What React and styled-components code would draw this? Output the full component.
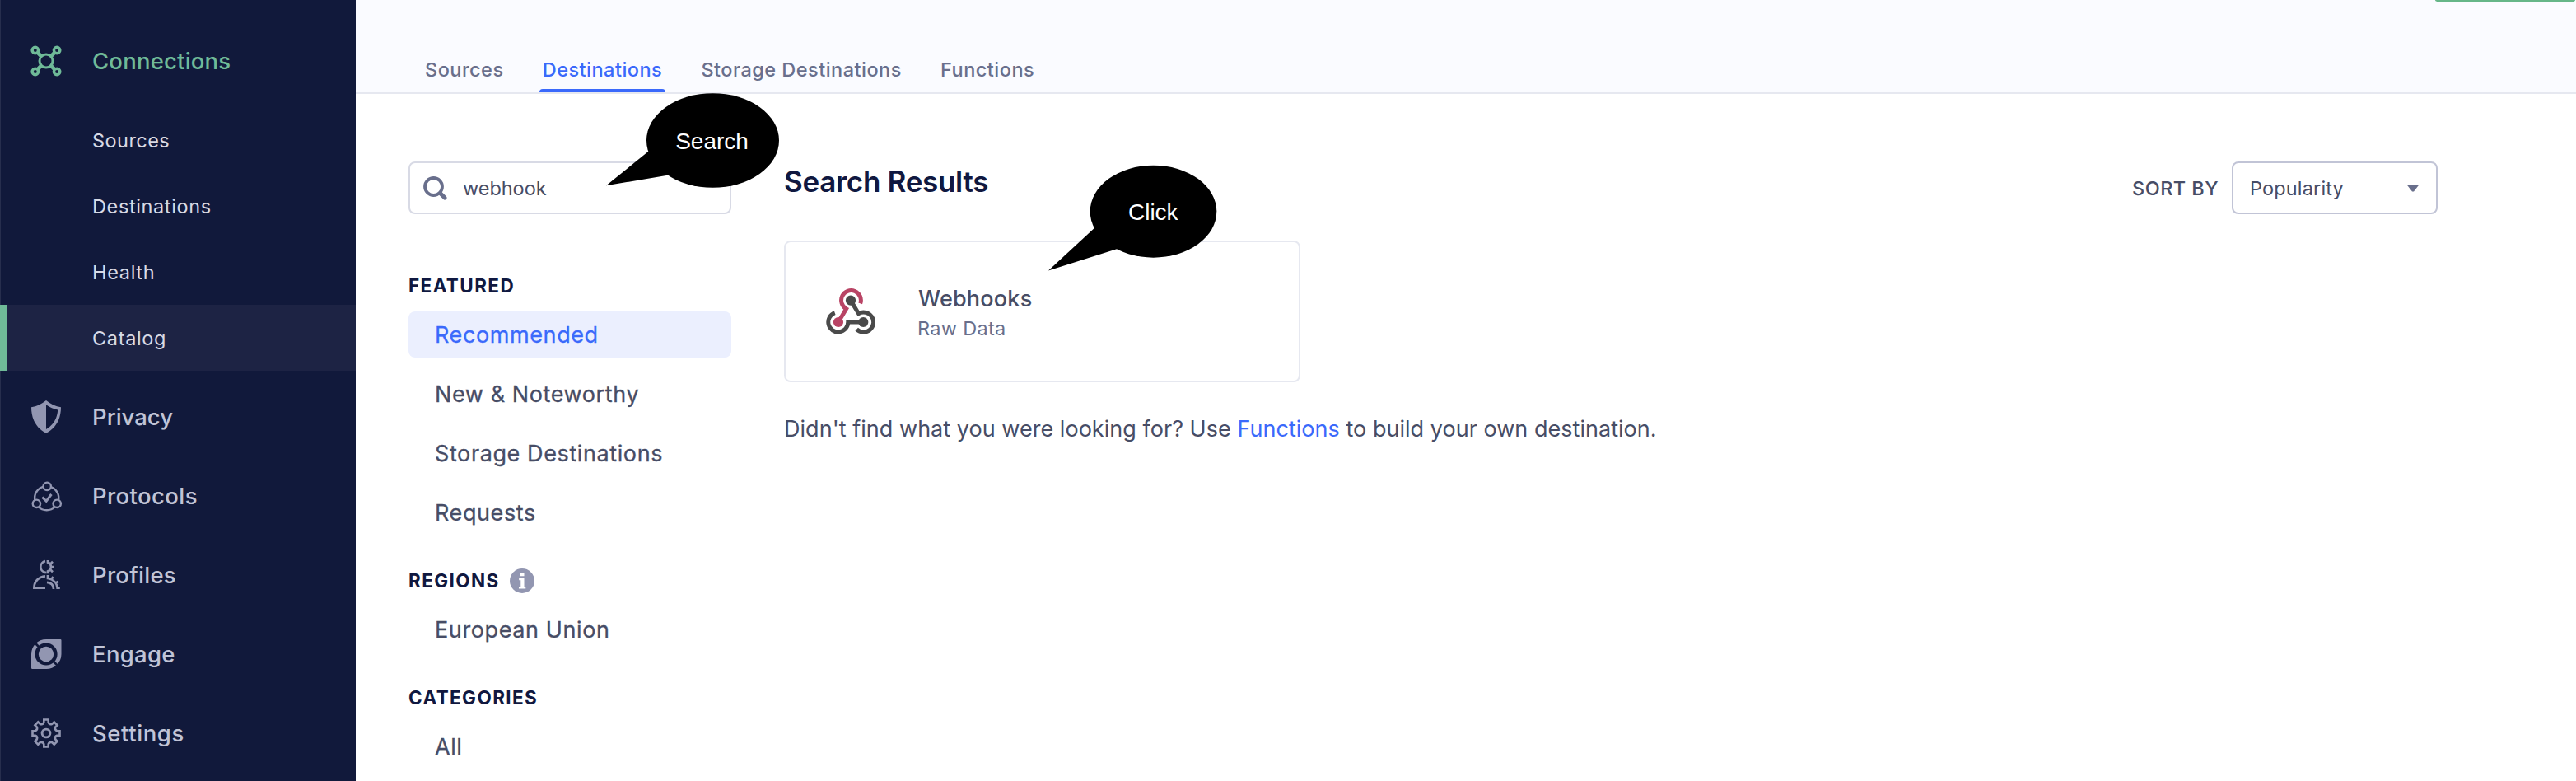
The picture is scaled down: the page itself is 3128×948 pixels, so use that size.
import React from 'react';
import styled, { createGlobalStyle } from 'styled-components';

const colors = {
  navy: '#11193b',
  navyActive: '#1d2344',
  heading: '#101840',
  text: '#474d66',
  muted: '#696f8c',
  icon: '#9296b1',
  green: '#6fba98',
  blue: '#3a69fb',
  border: '#e6e8f0',
};

const GlobalStyle = createGlobalStyle`
  *, *::before, *::after { box-sizing: border-box; }
  body {
    margin: 0;
    overflow: hidden;
    background: #ffffff;
    color: ${colors.text};
    font-family: Inter, 'Liberation Sans', sans-serif;
  }
`;

const Page = styled.div`
  position: relative;
  display: flex;
  width: 3128px;
  height: 948px;
  overflow: hidden;
`;

/* ---------- Sidebar ---------- */

const Sidebar = styled.nav`
  flex: none;
  width: 432px;
  padding-top: 26px;
  background: ${colors.navy};
  box-shadow: inset 1px 0 0 #272e4d;
`;

const NavItem = styled.a`
  display: flex;
  align-items: center;
  gap: 36px;
  height: 96px;
  padding-left: 36px;
  font-size: 27.5px;
  font-weight: 500;
  letter-spacing: ${(p) => p.$track}px;
  color: ${(p) => (p.$active ? colors.green : '#c1c4d6')};
`;

const NavIcon = styled.svg`
  flex: none;
  width: 40px;
  height: 40px;
  fill: none;
  stroke: ${(p) => (p.$active ? colors.green : colors.icon)};
`;

const SubNav = styled.div`
  padding: 8px 0;
`;

const SubNavItem = styled.a`
  display: flex;
  align-items: center;
  height: 80px;
  padding-left: 104px;
  border-left: 8px solid ${(p) => (p.$active ? colors.green : 'transparent')};
  background: ${(p) => (p.$active ? colors.navyActive : 'transparent')};
  background-clip: padding-box;
  font-size: 23.5px;
  letter-spacing: ${(p) => p.$track}px;
  color: #d8dae5;
`;

/* ---------- Header ---------- */

const Main = styled.main`
  flex: 1;
  min-width: 0;
  display: flex;
  flex-direction: column;
`;

const Header = styled.header`
  display: flex;
  justify-content: space-between;
  height: 114px;
  padding-left: 80px;
  background: #fafbff;
  border-bottom: 2px solid ${colors.border};
`;

const Tabs = styled.div`
  display: flex;
  align-items: flex-end;
  gap: 39.2px;
`;

const Tab = styled.a`
  padding: 0 4px;
  font-size: 23.5px;
  font-weight: 500;
  line-height: 47px;
  letter-spacing: 0.48px;
  white-space: nowrap;
  color: ${(p) => (p.$active ? colors.blue : colors.muted)};

  &::after {
    content: '';
    display: block;
    height: 4px;
    margin: 0 -4px;
    border-radius: 4px 4px 0 0;
    background: ${(p) => (p.$active ? colors.blue : 'transparent')};
  }
`;

const HeaderButton = styled.button`
  width: 170px;
  height: 2px;
  margin-right: 1px;
  padding: 0;
  border: 0;
  border-radius: 0 0 4px 4px / 0 0 2px 2px;
  background: #66b688;
`;

/* ---------- Filters ---------- */

const Content = styled.div`
  display: flex;
  gap: 64px;
  padding: 82px 168px 0 64px;
`;

const Filters = styled.aside`
  flex: none;
  width: 392px;
`;

const SearchBox = styled.div`
  display: flex;
  align-items: center;
  gap: 19px;
  height: 64px;
  margin-bottom: 66px;
  padding-left: 16px;
  border: 2px solid #d8dae5;
  border-radius: 8px;
  background: #ffffff;
  font-size: 23.5px;
  letter-spacing: -0.05px;

  svg {
    display: block;
    width: 29px;
    height: 29px;
    fill: none;
    stroke: ${colors.muted};
  }
`;

const FilterSection = styled.section`
  & + & {
    margin-top: 34px;
  }
`;

const FilterHeading = styled.h3`
  display: flex;
  align-items: center;
  gap: 12.5px;
  height: 40px;
  margin: 0 0 12px;
  font-size: 22.5px;
  font-weight: 700;
  letter-spacing: 1.4px;
  color: ${colors.heading};
`;

const InfoIcon = styled.svg`
  width: 30px;
  height: 30px;
  margin-top: 2px;
`;

const FilterList = styled.div`
  display: flex;
  flex-direction: column;
  gap: 16px;
`;

const FilterItem = styled.a`
  height: 56px;
  padding-left: 32px;
  border-radius: 8px;
  background: ${(p) => (p.$active ? '#ebeffe' : 'transparent')};
  font-size: 27px;
  font-weight: 400;
  -webkit-text-stroke: 0.3px currentColor;
  line-height: 58px;
  letter-spacing: 0.6px;
  color: ${(p) => (p.$active ? colors.blue : colors.text)};
`;

/* ---------- Results ---------- */

const Results = styled.section`
  flex: 1;
  min-width: 0;
`;

const ResultsHeader = styled.div`
  display: flex;
  justify-content: space-between;
  height: 64px;
`;

const Title = styled.h1`
  margin: 0;
  font-size: 35px;
  font-weight: 600;
  line-height: 49px;
  letter-spacing: -0.3px;
  color: ${colors.heading};
`;

const Sort = styled.label`
  display: flex;
  align-items: center;
  gap: 16px;
  font-size: 23.5px;
`;

const SortLabel = styled.span`
  font-weight: 500;
  letter-spacing: 0.44px;
`;

const SortSelect = styled.div`
  display: flex;
  align-items: center;
  justify-content: space-between;
  width: 250px;
  height: 64px;
  padding: 0 20px 0 20px;
  border: 2px solid #c1c4d6;
  border-radius: 8px;
  letter-spacing: 0.15px;

  &::after {
    content: '';
    width: 16px;
    height: 9px;
    background: ${colors.muted};
    clip-path: polygon(0 0, 100% 0, 56% 100%, 44% 100%);
  }
`;

const Card = styled.article`
  display: flex;
  align-items: center;
  gap: 52px;
  width: 627px;
  height: 172px;
  margin-top: 32px;
  padding-left: 49px;
  border: 2px solid ${colors.border};
  border-radius: 8px;
`;

const WebhookLogo = styled.svg`
  flex: none;
  width: 60px;
  height: 56px;
  fill: none;
`;

const CardText = styled.div`
  padding-top: 6px;
`;

const CardTitle = styled.div`
  font-size: 27px;
  font-weight: 500;
  line-height: 36px;
  letter-spacing: 0.2px;
`;

const CardMeta = styled.div`
  margin-left: -1px;
  font-size: 23.5px;
  line-height: 36px;
  letter-spacing: 0.28px;
  color: ${colors.muted};
`;

const Hint = styled.p`
  margin: 37px 0 0;
  font-size: 27px;
  line-height: 40px;
  letter-spacing: 0.03px;

  a {
    color: ${colors.blue};
  }
`;

/* ---------- Callouts over the page ---------- */

const Callout = styled.div`
  position: absolute;
  left: ${(p) => p.$left}px;
  top: ${(p) => p.$top}px;
  width: ${(p) => p.$width}px;
  height: ${(p) => p.$height}px;

  svg {
    display: block;
    width: 100%;
    height: 100%;
  }
`;

const CalloutLabel = styled.span`
  position: absolute;
  left: ${(p) => p.$x}px;
  top: ${(p) => p.$y}px;
  transform: translate(-50%, -50%);
  font-family: 'Liberation Sans', Arial, sans-serif;
  font-size: 28px;
  line-height: 32px;
  color: #ffffff;
`;

/* ---------- Icons ---------- */

const ConnectionsIcon = () => (
  <NavIcon viewBox="0 0 40 40" $active>
    <path d="M9 9.2L14 14.2M31 9.2L26 14.2M9 30.8L14 25.8M31 30.8L26 25.8" strokeWidth="4.6" />
    <circle cx="20" cy="20" r="8" strokeWidth="3" />
    <circle cx="6.8" cy="7" r="3.7" strokeWidth="3.5" fill={colors.navy} />
    <circle cx="33.1" cy="7" r="3.7" strokeWidth="3.5" fill={colors.navy} />
    <circle cx="6.8" cy="33" r="3.7" strokeWidth="3.5" fill={colors.navy} />
    <circle cx="33.1" cy="33" r="3.7" strokeWidth="3.5" fill={colors.navy} />
  </NavIcon>
);

const PrivacyIcon = () => (
  <NavIcon viewBox="0 0 40 40">
    <path
      fill={colors.icon}
      fillRule="evenodd"
      stroke="none"
      d="M20 0C14.5 4.6 8.5 7.3 2 8.3C2 23 8.5 34 20 39.8C31.5 34 38 23 38 8.3C31.5 7.3 25.5 4.6 20 0ZM20 5.2C24.6 8.4 29.2 10.4 34.2 11.4C33.4 22 28.8 30 20 35Z"
    />
  </NavIcon>
);

const ProtocolsIcon = () => (
  <NavIcon viewBox="0 0 40 40" strokeWidth="2.4">
    <circle cx="20.7" cy="22.7" r="14.6" />
    <circle cx="21.2" cy="8.3" r="4.7" fill={colors.navy} />
    <circle cx="8.4" cy="29.3" r="4.7" fill={colors.navy} />
    <circle cx="33.2" cy="29.3" r="4.7" fill={colors.navy} />
    <path d="M15.3 21.5L20.2 26.3L26.4 18" strokeWidth="3" />
  </NavIcon>
);

const ProfilesIcon = () => (
  <NavIcon viewBox="0 0 40 40" strokeWidth="2.7">
    <path d="M19 3.2A6.9 6.9 0 0 0 19 16.8V18.2" />
    <path d="M19 21.3C11 21.8 5.4 28 5.4 35.6H19" />
    <path d="M22 2V4.6A5.7 5.7 0 0 1 22 15.4V18.2" />
    <path d="M25.5 6.2L28 3.8M26 10H30M25.5 13.8L28 16.2" />
    <path d="M22 20V24C28.5 25 33 29.5 33.6 35.7H36.8" />
    <path d="M26.5 25L28.5 22M31.5 29.5L35 27.8" />
    <path d="M21 28.8C26 29.2 29 32.3 29 37" />
  </NavIcon>
);

const EngageIcon = () => (
  <NavIcon viewBox="0 0 40 40">
    <path
      fill={colors.icon}
      stroke="none"
      d="M20 2H37.3A1.2 1.2 0 0 1 38.5 3.2V20A18 18 0 0 1 20 38H3.2A1.2 1.2 0 0 1 2 36.8V20A18 18 0 0 1 20 2Z"
    />
    <path d="M6.5 6.5L14 14M26 26L34.5 34.5" stroke={colors.navy} strokeWidth="2.8" />
    <circle cx="20" cy="20" r="13.6" fill={colors.navy} stroke="none" />
    <circle cx="20" cy="20" r="9.2" fill={colors.icon} stroke="none" />
  </NavIcon>
);

const gearOutline = () => {
  const turn = (x, y, i) => {
    const a = (i * Math.PI) / 4;
    const px = 20 + x * Math.cos(a) - y * Math.sin(a);
    const py = 20 + x * Math.sin(a) + y * Math.cos(a);
    return `${px.toFixed(2)} ${py.toFixed(2)}`;
  };
  let d = '';
  for (let i = 0; i < 8; i += 1) {
    d += `${i ? 'L' : 'M'}${turn(-2.7, -13.2, i)}L${turn(-2.7, -16.5, i)}L${turn(2.7, -16.5, i)}L${turn(2.7, -13.2, i)}`;
    d += `Q${turn(4.1, -9.9, i)} ${turn(-2.7, -13.2, i + 1)}`;
  }
  return `${d}Z`;
};

const SettingsIcon = () => (
  <NavIcon viewBox="0 0 40 40" strokeWidth="2.6">
    <path d={gearOutline()} />
    <circle cx="20" cy="20" r="4.9" strokeWidth="2.9" />
  </NavIcon>
);

const subItems = [
  { label: 'Sources', track: 0.45 },
  { label: 'Destinations', track: 0.62 },
  { label: 'Health', track: 0.68 },
  { label: 'Catalog', track: 0.66, active: true },
];

const navItems = [
  { label: 'Privacy', track: 0, Icon: PrivacyIcon },
  { label: 'Protocols', track: 0.4, Icon: ProtocolsIcon },
  { label: 'Profiles', track: 0.28, Icon: ProfilesIcon },
  { label: 'Engage', track: 0.3, Icon: EngageIcon },
  { label: 'Settings', track: 0.58, Icon: SettingsIcon },
];

const tabs = ['Sources', 'Destinations', 'Storage Destinations', 'Functions'];

const filterSections = [
  { title: 'FEATURED', items: ['Recommended', 'New & Noteworthy', 'Storage Destinations', 'Requests'] },
  { title: 'REGIONS', info: true, items: ['European Union'] },
  { title: 'CATEGORIES', items: ['All'] },
];

export default function App() {
  return (
    <Page>
      <GlobalStyle />
      <Sidebar>
        <NavItem $active $track={0.2}>
          <ConnectionsIcon />
          Connections
        </NavItem>
        <SubNav>
          {subItems.map(({ label, track, active }) => (
            <SubNavItem key={label} $track={track} $active={active}>
              {label}
            </SubNavItem>
          ))}
        </SubNav>
        {navItems.map(({ label, track, Icon }) => (
          <NavItem key={label} $track={track}>
            <Icon />
            {label}
          </NavItem>
        ))}
      </Sidebar>

      <Main>
        <Header>
          <Tabs>
            {tabs.map((tab) => (
              <Tab key={tab} $active={tab === 'Destinations'}>
                {tab}
              </Tab>
            ))}
          </Tabs>
          <HeaderButton aria-hidden="true" />
        </Header>

        <Content>
          <Filters>
            <SearchBox>
              <svg viewBox="0 0 29 29">
                <circle cx="12.5" cy="12.5" r="10.5" strokeWidth="3.8" />
                <path d="M20.5 20.5L26 26" strokeWidth="5" strokeLinecap="round" />
              </svg>
              webhook
            </SearchBox>
            {filterSections.map(({ title, info, items }) => (
              <FilterSection key={title}>
                <FilterHeading>
                  {title}
                  {info && (
                    <InfoIcon viewBox="0 0 30 30">
                      <circle cx="15" cy="15" r="15" fill={colors.icon} />
                      <path d="M13 6h4.500v3.300H13zM11.200 11.600h6.300v10.300h1.800v2.600h-8.300v-2.600h2.300v-7.700h-2.100z" fill="#fff" />
                    </InfoIcon>
                  )}
                </FilterHeading>
                <FilterList>
                  {items.map((item) => (
                    <FilterItem key={item} $active={item === 'Recommended'}>
                      {item}
                    </FilterItem>
                  ))}
                </FilterList>
              </FilterSection>
            ))}
          </Filters>

          <Results>
            <ResultsHeader>
              <Title>Search Results</Title>
              <Sort>
                <SortLabel>SORT BY</SortLabel>
                <SortSelect>Popularity</SortSelect>
              </Sort>
            </ResultsHeader>
            <Card>
              <WebhookLogo viewBox="0 0 60 56">
                <path
                  d="M10.7 29.7A12 12 0 1 0 26.8 40.9H45.3"
                  stroke="#4a4a4a"
                  strokeWidth="5"
                />
                <path
                  d="M30 14.6L39.6 30.7A12 12 0 1 1 37.2 49.6"
                  stroke="#4a4a4a"
                  strokeWidth="5"
                />
                <path
                  d="M41.7 18.4A11.9 11.9 0 1 0 24.6 24.8L15 41"
                  stroke="#b94465"
                  strokeWidth="5"
                />
                <circle cx="30" cy="14.6" r="6.1" fill="#4a4a4a" />
                <circle cx="45.3" cy="41" r="6.1" fill="#4a4a4a" />
                <circle cx="15" cy="41" r="6.1" fill="#b94465" />
              </WebhookLogo>
              <CardText>
                <CardTitle>Webhooks</CardTitle>
                <CardMeta>Raw Data</CardMeta>
              </CardText>
            </Card>
            <Hint>
              Didn't find what you were looking for? Use <a>Functions</a> to build your own destination.
            </Hint>
          </Results>
        </Content>
      </Main>

      <Callout $left={736} $top={113} $width={210} $height={115}>
        <svg viewBox="0 0 210 115">
          <ellipse cx="129.5" cy="57.5" rx="80.5" ry="57.3" />
          <path d="M0 112.3L51 71L100 60L76 99.5Z" />
        </svg>
        <CalloutLabel $x={128.5} $y={58.5}>Search</CalloutLabel>
      </Callout>
      <Callout $left={1273} $top={200} $width={205} $height={129}>
        <svg viewBox="0 0 205 129">
          <ellipse cx="127.5" cy="56.7" rx="76.8" ry="56" />
          <path d="M0 128.6L56 76.7L100 60L83 102.3Z" />
        </svg>
        <CalloutLabel $x={127.3} $y={58}>Click</CalloutLabel>
      </Callout>
    </Page>
  );
}
